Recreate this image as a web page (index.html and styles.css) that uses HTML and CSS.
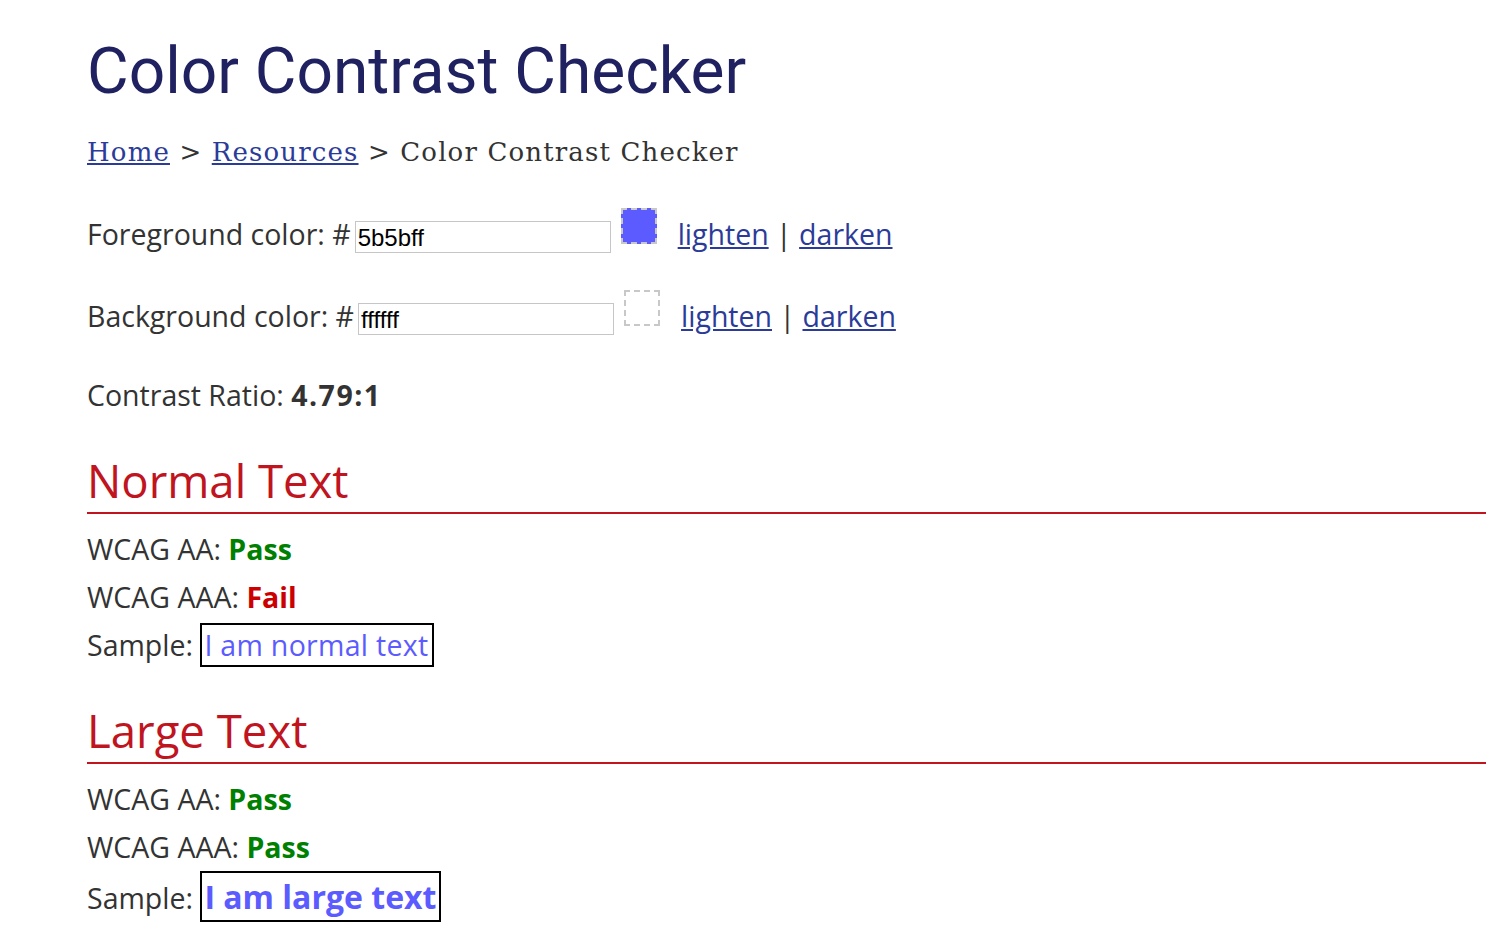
FILE: index.html
```html
<!DOCTYPE html>
<html lang="en">
<head>
<meta charset="utf-8">
<title>Color Contrast Checker</title>
<link rel="stylesheet" href="styles.css">
</head>
<body>
<main class="page">
  <h1 class="title">Color Contrast Checker</h1>
  <nav class="crumbs"><a href="#">Home</a> &gt; <a href="#">Resources</a> &gt; Color Contrast Checker</nav>

  <div class="color-row">
    <label class="color-label">Foreground color: #</label><input class="hex" type="text" value="5b5bff"><span class="swatch swatch-fg"></span><span class="tools"><a href="#">lighten</a> | <a href="#">darken</a></span>
  </div>
  <div class="color-row">
    <label class="color-label">Background color: #</label><input class="hex" type="text" value="ffffff"><span class="swatch swatch-bg"></span><span class="tools"><a href="#">lighten</a> | <a href="#">darken</a></span>
  </div>

  <p class="ratio">Contrast Ratio: <strong>4.79:1</strong></p>

  <section class="result">
    <h2 class="result-title">Normal Text</h2>
    <p class="line">WCAG AA: <strong class="pass">Pass</strong></p>
    <p class="line">WCAG AAA: <strong class="fail">Fail</strong></p>
    <p class="line">Sample: <span class="sample">I am normal text</span></p>
  </section>

  <section class="result">
    <h2 class="result-title">Large Text</h2>
    <p class="line">WCAG AA: <strong class="pass">Pass</strong></p>
    <p class="line">WCAG AAA: <strong class="pass">Pass</strong></p>
    <p class="line">Sample: <span class="sample sample-large">I am large text</span></p>
  </section>
</main>
</body>
</html>
```

FILE: styles.css
```css
html, body {
  margin: 0;
  padding: 0;
  background: #ffffff;
}
body {
  font-family: "Open Sans", "Lato", sans-serif;
  color: #333333;
}
.page {
  padding: 0 26px 0 87px;
}
.title {
  font-family: "Roboto", sans-serif;
  font-weight: 400;
  font-size: 64px;
  line-height: 76px;
  color: #1f2160;
  margin: 34px 0 0 0;
}
.crumbs {
  font-family: "DejaVu Serif", serif;
  font-size: 26px;
  letter-spacing: 1.15px;
  line-height: 40px;
  color: #333333;
  margin-top: 22px;
}
.crumbs a {
  color: #2b3b99;
}
.color-row {
  display: flex;
  align-items: center;
  font-size: 28.5px;
  height: 50px;
  margin-top: 37px;
}
.color-row + .color-row {
  margin-top: 32px;
}
.color-label {
  white-space: nowrap;
}
.hex {
  box-sizing: border-box;
  width: 256px;
  height: 32px;
  margin: 6px 0 0 4px;
  padding: 2px 2px 0;
  border: 1px solid #c6c6c6;
  font-family: "Liberation Sans", Arial, sans-serif;
  font-size: 24px;
  color: #000;
}
.swatch {
  box-sizing: border-box;
  display: block;
  width: 36px;
  height: 36px;
  margin: -16px 0 0 10px;
  border: 2px dashed #c8c8c8;
}
.swatch-fg {
  background: #5b5bff;
}
.swatch-bg {
  background: #ffffff;
}
.tools {
  margin-left: 21px;
  white-space: nowrap;
}
.tools a {
  color: #2b3b99;
}
.ratio {
  font-size: 28.5px;
  margin: 34px 0 0 0;
  line-height: 40px;
}
.ratio strong {
  font-weight: 700;
  letter-spacing: 1.5px;
}
.result {
  margin-top: 37px;
}
.result + .result {
  margin-top: 33px;
}
.result-title {
  font-weight: 400;
  font-size: 45.5px;
  line-height: 56px;
  color: #c0141e;
  margin: 0;
  border-bottom: 2px solid #c0141e;
  padding-bottom: 4px;
}
.line {
  font-size: 28.5px;
  line-height: 48px;
  margin: 0;
}
.line:first-of-type {
  margin-top: 11px;
}
.pass {
  color: #008000;
}
.fail {
  color: #cc0000;
}
.sample {
  display: inline-block;
  border: 2px solid #000;
  color: #5b5bff;
  padding: 0 3px 0 2px;
  line-height: 40px;
  letter-spacing: 0.3px;
}
.sample-large {
  font-weight: 700;
  font-size: 32px;
  line-height: 47px;
  letter-spacing: 0;
}
```
